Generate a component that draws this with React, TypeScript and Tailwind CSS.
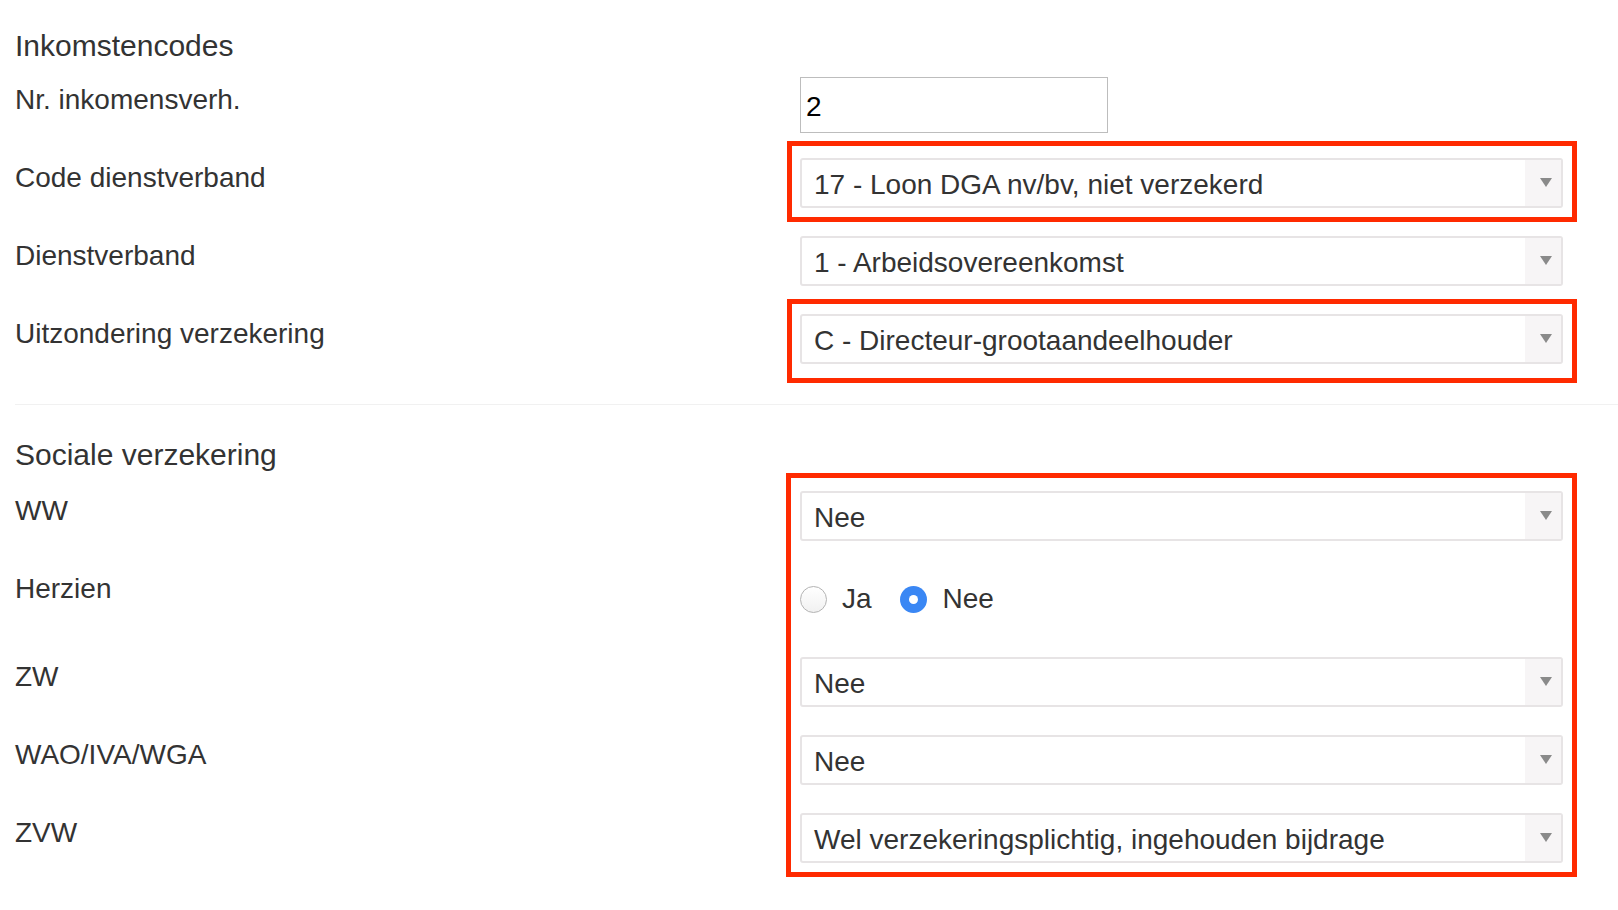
import React from "react";

const LABEL = "text-[28px] leading-[40px] text-[#333333] whitespace-nowrap";

function Select({ value }: { value: string }) {
  return (
    <div className="flex h-[50px] w-[763px] overflow-hidden rounded-[3px] border-2 border-[#e7e4e5] bg-white">
      <div className="flex-1 whitespace-nowrap pl-[12px] pt-[4px] text-[28px] leading-[42px] text-[#333333]">
        {value}
      </div>
      <div className="flex w-[36px] items-center justify-end bg-[#f7f5f6] pb-[2px] pr-[9px]">
        <div className="h-0 w-0 border-x-[6px] border-t-[9px] border-x-transparent border-t-[#8a8a8a]" />
      </div>
    </div>
  );
}

function Row({ label, children, h = "h-[50px]" }: { label: string; children: React.ReactNode; h?: string }) {
  return (
    <div className={`flex items-start ${h}`}>
      <div className={`w-[785px] shrink-0 ${LABEL}`}>{label}</div>
      {children}
    </div>
  );
}

function Radio({ checked }: { checked?: boolean }) {
  if (checked) {
    return (
      <div className="flex h-[27px] w-[27px] items-center justify-center rounded-full bg-[#3a87f4]">
        <div className="h-[9px] w-[9px] rounded-full bg-white" />
      </div>
    );
  }
  return (
    <div className="h-[27px] w-[27px] rounded-full border border-[#b3b3b3] bg-gradient-to-b from-white to-[#f1f1f1]" />
  );
}

export default function App() {
  return (
    <div className="relative min-h-[910px] w-full bg-white pl-[15px] pt-[28px] font-['Liberation_Sans',Arial,sans-serif]">
      <h2 className="text-[30px] leading-[36px] text-[#333333]">Inkomstencodes</h2>

      <div className="mt-[13px] flex flex-col">
        <div className="flex h-[56px] items-start">
          <div className={`w-[785px] shrink-0 pt-[3px] ${LABEL}`}>Nr. inkomensverh.</div>
          <div className="flex h-[56px] w-[308px] items-center border border-[#bdbdbd] bg-white pl-[5px] pt-[3px] text-[28px] text-black">
            2
          </div>
        </div>
        <div className="mt-[25px] flex flex-col gap-[28px]">
          <Row label="Code dienstverband">
            <Select value="17 - Loon DGA nv/bv, niet verzekerd" />
          </Row>
          <Row label="Dienstverband">
            <Select value="1 - Arbeidsovereenkomst" />
          </Row>
          <Row label="Uitzondering verzekering">
            <Select value="C - Directeur-grootaandeelhouder" />
          </Row>
        </div>
      </div>

      <div className="mt-[40px] h-px bg-[#f1f1f1]" />

      <h2 className="mt-[32px] text-[30px] leading-[36px] text-[#333333]">Sociale verzekering</h2>

      <div className="mt-[18px] flex flex-col gap-[28px]">
        <Row label="WW">
          <Select value="Nee" />
        </Row>
        <Row label="Herzien" h="h-[60px]">
          <div className="flex h-[60px] items-center text-[28px] text-[#333333]">
            <Radio />
            <span className="ml-[15px] leading-[40px]">Ja</span>
            <div className="ml-[28px]">
              <Radio checked />
            </div>
            <span className="ml-[16px] leading-[40px]">Nee</span>
          </div>
        </Row>
        <Row label="ZW">
          <Select value="Nee" />
        </Row>
        <Row label="WAO/IVA/WGA">
          <Select value="Nee" />
        </Row>
        <Row label="ZVW">
          <Select value="Wel verzekeringsplichtig, ingehouden bijdrage" />
        </Row>
      </div>

      <div className="pointer-events-none absolute left-[787px] top-[141px] h-[81px] w-[790px] border-[5px] border-[#ff2a00]" />
      <div className="pointer-events-none absolute left-[787px] top-[299px] h-[84px] w-[790px] border-[5px] border-[#ff2a00]" />
      <div className="pointer-events-none absolute left-[786px] top-[473px] h-[404px] w-[791px] border-[5px] border-[#ff2a00]" />
    </div>
  );
}
